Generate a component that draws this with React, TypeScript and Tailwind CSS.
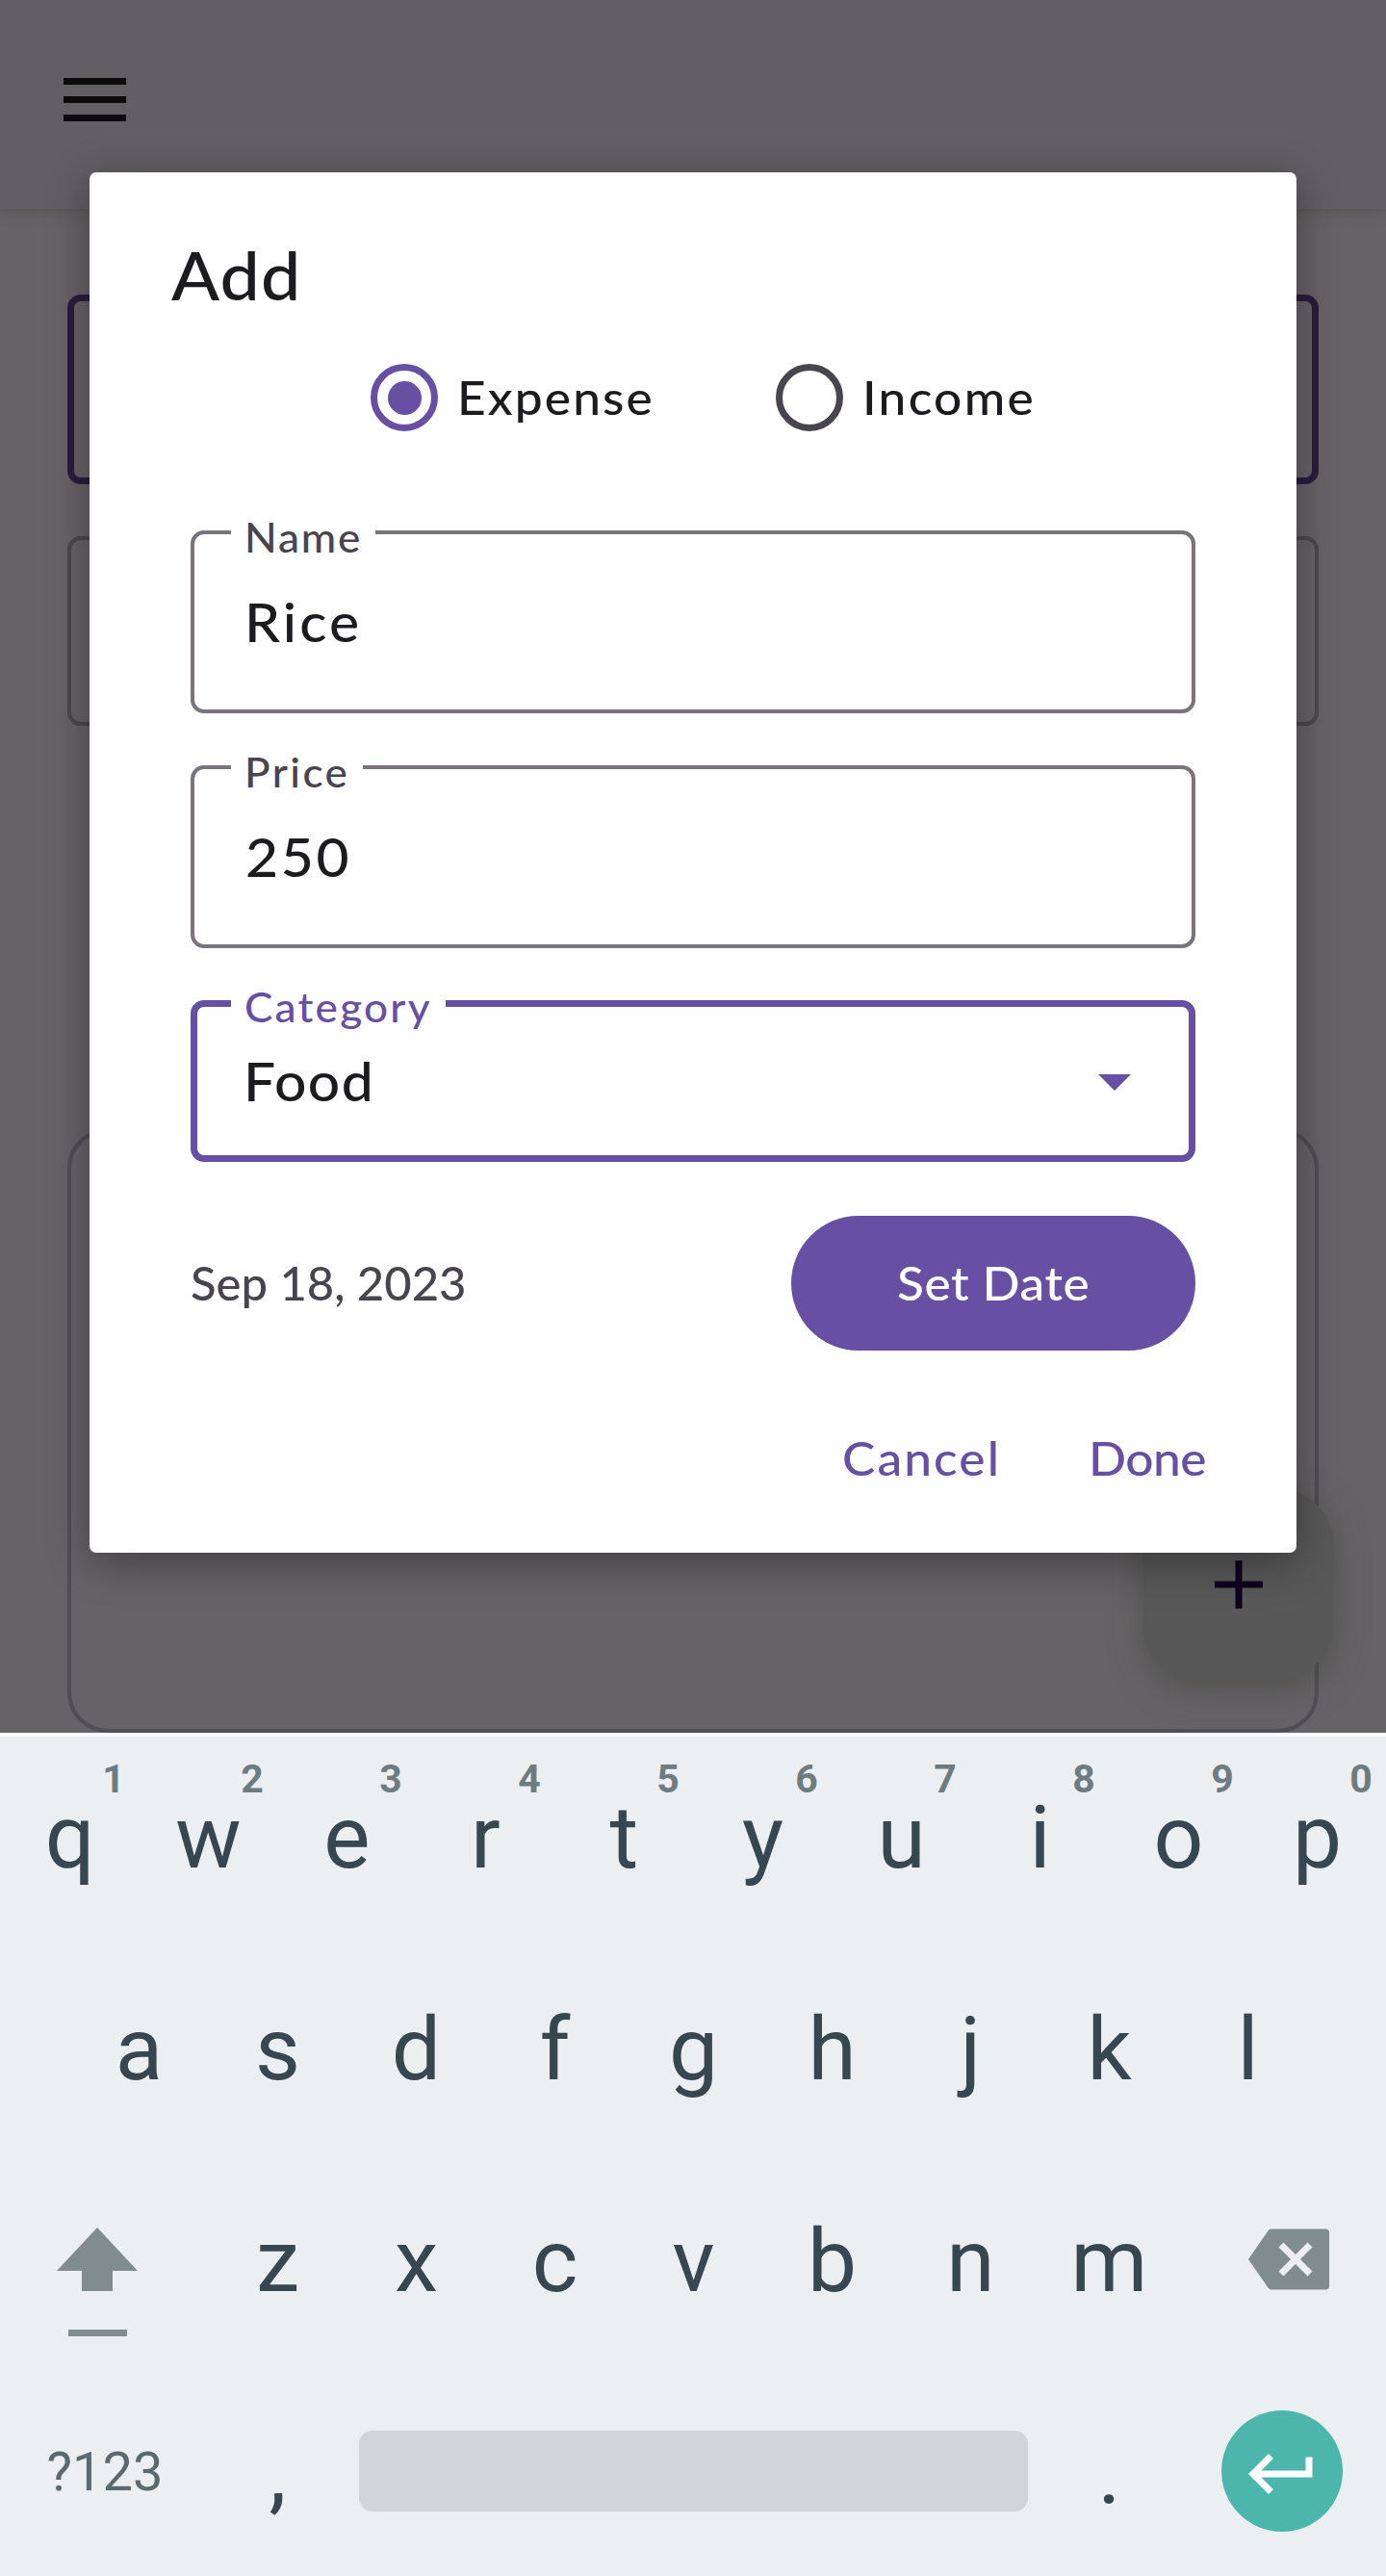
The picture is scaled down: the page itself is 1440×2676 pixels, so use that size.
import type { ReactNode } from "react";

const ROW_1 = ["q", "w", "e", "r", "t", "y", "u", "i", "o", "p"];
const ROW_2 = ["a", "s", "d", "f", "g", "h", "j", "k", "l"];
const ROW_3 = ["z", "x", "c", "v", "b", "n", "m"];

/** Text stretched a little horizontally from its left edge. */
function Wide({ className = "", children }: { className?: string; children: ReactNode }) {
  return <span className={`inline-block origin-left scale-x-[1.05] whitespace-nowrap ${className}`}>{children}</span>;
}

function Key({ label, hint }: { label: string; hint?: string }) {
  return (
    <div className="relative h-[210px] w-36 shrink-0 pl-px text-center text-[91px] leading-[210px] text-[#37474f]">
      {label}
      {hint && (
        <span className="absolute left-[98px] top-5 w-10 text-center text-[41px] font-bold leading-[48px] text-[#6e7b80]">
          {hint}
        </span>
      )}
    </div>
  );
}

function Radio({ checked = false }: { checked?: boolean }) {
  return checked ? (
    <span className="flex size-[70px] items-center justify-center rounded-full border-[7px] border-[#6750a4]">
      <span className="size-[35px] rounded-full bg-[#6750a4]" />
    </span>
  ) : (
    <span className="size-[70px] rounded-full border-[7px] border-[#49454e]" />
  );
}

function Backdrop() {
  return (
    <div className="flex h-full flex-col bg-[#666366]">
      <header className="z-0 flex h-[217px] shrink-0 flex-col gap-3 bg-[#625f64] pl-[65.5px] pt-[81px] shadow-[0_3px_14px_rgba(50,55,35,0.3)]">
        <span className="h-[7px] w-[65px] bg-[#0b0b0c]" />
        <span className="h-[7px] w-[65px] bg-[#0b0b0c]" />
        <span className="h-[7px] w-[65px] bg-[#0b0b0c]" />
      </header>
      <div className="mx-[70px] mt-[89px] h-[197px] shrink-0 rounded-[14px] border-[7px] border-[#281e41]" />
      <div className="mx-[70px] mt-[54px] h-[197px] shrink-0 rounded-[14px] border-4 border-[#4b494c]" />
      <div className="mx-[70px] mt-[418px] h-[628px] shrink-0 rounded-[42px] border-4 border-[#504e53]" />
    </div>
  );
}

function Dialog() {
  return (
    <section className="absolute left-[93px] top-[179px] flex h-[1434px] w-[1254px] flex-col rounded-[7px] bg-white pt-[64px] font-['Lato',sans-serif] font-medium text-[#1c1b1f] shadow-[0_10px_44px_rgba(0,0,0,0.36)]">
      <h1 className="pl-[85px] text-[70px] font-medium leading-[84px]">
        <Wide className="tracking-[1.2px]">Add</Wide>
      </h1>

      <div className="mt-[51px] flex h-[70px] pl-[292px] text-[49px] leading-[68px]">
        <label className="flex w-[421px]">
          <Radio checked />
          <Wide className="ml-[20px] tracking-[2px]">Expense</Wide>
        </label>
        <label className="flex">
          <Radio />
          <Wide className="ml-[20px] tracking-[2.2px]">Income</Wide>
        </label>
      </div>

      <div className="relative ml-[105px] mt-[103px] h-[190px] w-[1044px] rounded-[14px] border-4 border-[#79747e] pl-[52px] text-[56px] leading-[181px]">
        <span className="absolute -top-[22px] left-[38px] h-[50px] w-[150px] bg-white pl-[14px] text-[42px] leading-[50px] text-[#49454e]">
          <Wide className="tracking-[1.7px]">Name</Wide>
        </span>
        <Wide className="tracking-[3px]">Rice</Wide>
      </div>

      <div className="relative ml-[105px] mt-[54px] h-[190px] w-[1044px] rounded-[14px] border-4 border-[#79747e] pl-[53px] text-[56px] leading-[181px]">
        <span className="absolute -top-[22px] left-[38px] h-[50px] w-[137px] bg-white pl-[14px] text-[42px] leading-[50px] text-[#49454e]">
          <Wide className="tracking-[2.3px]">Price</Wide>
        </span>
        <Wide className="tracking-[2.5px]">250</Wide>
      </div>

      <div className="relative ml-[105px] mt-[54px] flex h-[168px] w-[1044px] rounded-[14px] border-[7px] border-[#6750a4] bg-[#fefefe] pl-[48px] text-[56px] leading-[153px]">
        <span className="absolute -top-[25px] left-[35px] h-[50px] w-[223px] bg-white pl-[14px] text-[42px] leading-[50px] text-[#6750a4]">
          <Wide className="tracking-[2.1px]">Category</Wide>
        </span>
        <Wide className="tracking-[1.3px]">Food</Wide>
        <svg className="ml-auto mr-[60px] mt-[70px] h-[17px] w-[34px]" viewBox="0 0 34 17" fill="#6750a4">
          <path d="M0 0h34L17 17z" />
        </svg>
      </div>

      <div className="ml-[105px] mt-[56px] flex h-[140px] w-[1044px] justify-between text-[49px] leading-[138px]">
        <span className="text-[#49454e]">Sep 18, 2023</span>
        <button className="w-[420px] rounded-full bg-[#6750a4] pb-[2px] pl-[110px] text-left leading-[136px] text-white">
          <Wide className="tracking-[0.5px]">Set Date</Wide>
        </button>
      </div>

      <div className="mt-[81px] flex pl-[782px] text-[49px] leading-[60px] text-[#6750a4]">
        <button className="w-[256px] text-left">
          <Wide className="tracking-[2px]">Cancel</Wide>
        </button>
        <button className="text-left">
          <Wide className="tracking-[-0.5px]">Done</Wide>
        </button>
      </div>
    </section>
  );
}

function Keyboard() {
  return (
    <div className="flex h-[872px] flex-col bg-[#ebeff2] font-['Roboto',sans-serif]">
      <div className="flex h-[220px]">
        {ROW_1.map((k, i) => (
          <Key key={k} label={k} hint={String((i + 1) % 10)} />
        ))}
      </div>
      <div className="flex h-[220px] pl-[72px]">
        {ROW_2.map((k) => (
          <Key key={k} label={k} />
        ))}
      </div>
      <div className="flex h-[220px]">
        <svg className="ml-[59px] mr-[73px] mt-[70px] h-[113px] w-[84px]" viewBox="0 0 84 113" fill="#818c8f">
          <path d="M42 0L84 45H58V66H26V45H0zM12 106h61v7H12z" />
        </svg>
        {ROW_3.map((k) => (
          <Key key={k} label={k} />
        ))}
        <svg className="ml-[73px] mt-[61px] size-[84px]" viewBox="0 0 24 24" fill="#818c8f">
          <path d="M23 3H7c-.5 0-.8.1-1.1.5L0 12l5.900 8.500c.3.400.6.500 1.100.500h16c.6 0 1-.4 1-1V4c0-.6-.4-1-1-1zm-4 12.590L17.590 17 14 13.410 10.410 17 9 15.590 12.590 12 9 8.410 10.410 7 14 10.590 17.590 7 19 8.410 15.410 12z" />
        </svg>
      </div>
      <div className="flex h-[212px]">
        <div className="w-[216px] pl-[2px] text-center text-[56px] leading-[208px] text-[#5b6a6e]">?123</div>
        <Key label="," />
        <div className="ml-[13px] mt-[61px] h-[84px] w-[695px] rounded-[14px] bg-[#d1d5d8]" />
        <div className="ml-3">
          <Key label="." />
        </div>
        <div className="ml-[45px] mt-[40px] size-[126px] rounded-full bg-[#4db6ac] pl-[21px] pt-[24px]">
          <svg className="size-[84px]" viewBox="0 0 24 24" fill="white">
            <path d="M19 7v4H5.830l3.580-3.590L8 6l-6 6 6 6 1.410-1.410L5.830 13H21V7z" />
          </svg>
        </div>
      </div>
    </div>
  );
}

export default function App() {
  return (
    <main className="flex h-[2676px] w-[1440px] flex-col overflow-hidden">
      <div className="relative h-[1800px] overflow-hidden">
        <Backdrop />
        <div className="absolute left-[1188px] top-[1547px] flex size-[197px] items-center justify-center rounded-[56px] bg-[#585858] shadow-[0_10px_34px_rgba(60,65,55,0.5)]">
          <svg className="size-[50px]" viewBox="0 0 50 50" fill="#0e0020">
            <path d="M21.500 0h7v21.500H50v7H28.500V50h-7V28.500H0v-7h21.500z" />
          </svg>
        </div>
        <Dialog />
      </div>
      <div className="h-1 bg-[#f8f9fb]" />
      <Keyboard />
    </main>
  );
}
